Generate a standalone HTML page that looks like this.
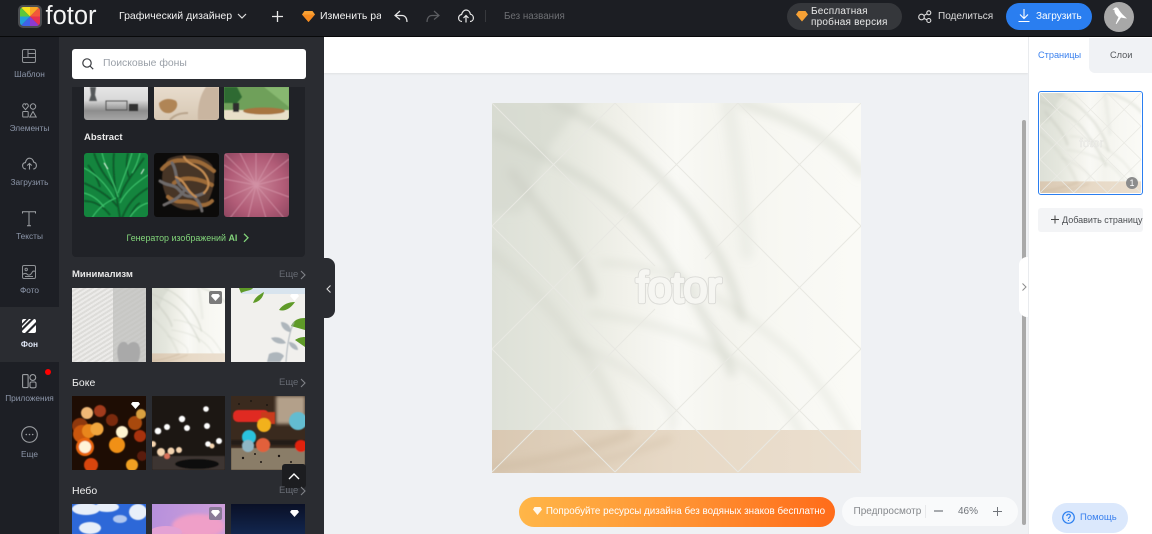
<!DOCTYPE html>
<html lang="ru"><head><meta charset="utf-8"><title>Fotor</title>
<style>
*{box-sizing:border-box}
html,body{margin:0;padding:0}
body{width:1152px;height:534px;overflow:hidden;position:relative;background:#eff1f4;font-family:"Liberation Sans","Noto Sans CJK SC",sans-serif}
.a{position:absolute}
.t{position:absolute;white-space:nowrap;line-height:1}
svg{position:absolute;display:block;overflow:visible}
.r{position:absolute;left:0;width:59px;text-align:center;font-size:8.3px;color:#8d97aa;line-height:1;white-space:nowrap}
.h{position:absolute;left:72px;font-size:9.5px;font-weight:bold;color:#e8e8e8;line-height:1}
.m{position:absolute;left:279px;font-size:9.5px;color:#666a72;line-height:1}
.i{position:absolute;overflow:hidden}
.i svg{left:0;top:0}
</style></head><body>

<svg width="0" height="0" style="position:absolute"><defs>
<filter id="b4" x="-20%" y="-20%" width="140%" height="140%"><feGaussianBlur stdDeviation="4.5"/></filter>
<filter id="b1" x="-10%" y="-10%" width="120%" height="120%"><feGaussianBlur stdDeviation=".6"/></filter>
<filter id="b3" x="-10%" y="-10%" width="120%" height="120%"><feGaussianBlur stdDeviation="1.6"/></filter>
<linearGradient id="wall" x1="0" x2="1" y1="0" y2="0"><stop offset="0" stop-color="#dde0d7"/><stop offset=".2" stop-color="#e5e7de"/><stop offset=".36" stop-color="#f1f1ea"/><stop offset=".5" stop-color="#f9f9f5"/><stop offset=".64" stop-color="#f4f4ee"/><stop offset=".8" stop-color="#f8f8f3"/><stop offset="1" stop-color="#fafaf6"/></linearGradient>
<linearGradient id="floor" x1="0" x2="1"><stop offset="0" stop-color="#d9c8b2"/><stop offset=".5" stop-color="#e7d9c6"/><stop offset="1" stop-color="#ebdfcf"/></linearGradient>
<symbol id="scene" viewBox="0 0 369 370" preserveAspectRatio="none">
<rect width="369" height="370" fill="url(#wall)"/>
<g filter="url(#b4)" fill="none" stroke="#c9ccc1" stroke-linecap="round">
<path d="M-5 -5H95L60 40 30 110H-5Z" fill="#d4d7cd" stroke="none" opacity=".6"/>
<path d="M0 30C70 60 130 90 170 150 195 185 220 220 240 270" stroke-width="7" opacity=".55"/>
<path d="M60 0C110 20 150 50 200 110 220 140 240 170 250 215" stroke-width="6" opacity=".65"/>
<path d="M20 70C50 110 90 150 100 190" stroke-width="10" opacity=".5"/>
<path d="M110 160C170 160 230 190 300 250 330 280 345 310 369 350" stroke-width="5" opacity=".38"/>
<path d="M100 210C170 220 240 240 290 300 305 320 315 340 320 360" stroke-width="5" opacity=".38"/>
<path d="M80 240C150 270 190 300 180 325" stroke-width="7" opacity=".28"/>
<path d="M250 0C300 15 340 35 369 70" stroke-width="10" opacity=".38"/>
<path d="M0 150C50 190 100 250 130 320" stroke-width="12" opacity=".25"/>
<path d="M235 0C245 40 250 100 255 150" stroke-width="14" opacity=".18"/>
</g>
<rect y="327" width="369" height="43" fill="url(#floor)"/>
<g filter="url(#b4)" fill="none" stroke="#c9b69c" opacity=".55"><path d="M0 365C50 360 100 345 140 330" stroke-width="7"/><path d="M40 372C90 365 140 350 180 335" stroke-width="4"/></g>
</symbol>
</defs></svg>

<!-- top bar -->
<div class="a" style="left:0;top:0;width:1152px;height:37px;background:#1c1e23;border-bottom:1px solid #08090a"></div>
<svg style="left:18px;top:5px" width="24" height="23" viewBox="0 0 24 23">
<rect width="24" height="23" rx="5" fill="#4a4c50"/>
<g transform="translate(12 11.5)"><clipPath id="lc"><rect x="-10" y="-9.5" width="20" height="19" rx="3.5"/></clipPath><g clip-path="url(#lc)">
<path d="M0 0L-14 -14H0Z" fill="#f7e01d"/><path d="M0 0V-14H14Z" fill="#f9a826"/><path d="M0 0L14 -14V0Z" fill="#f2583a"/><path d="M0 0H14V14Z" fill="#e8304f"/><path d="M0 0L14 14H0Z" fill="#8e3ad0"/><path d="M0 0V14H-14Z" fill="#3f62e8"/><path d="M0 0L-14 14V0Z" fill="#22a0d8"/><path d="M0 0H-14V-14Z" fill="#5cc83a"/></g></g>
</svg>
<div class="t" style="left:45.500px;top:0;font-size:25.500px;color:#f4f4f4;line-height:32px">fotor</div>
<div class="t" style="left:119px;top:11px;font-size:10.500px;color:#f2f2f2">Графический дизайнер</div>
<svg style="left:237px;top:13px" width="10" height="7" fill="none" stroke="#ddd" stroke-width="1.200"><path d="M1 1l4 4 4-4"/></svg>
<svg style="left:272px;top:11px" width="11" height="11" stroke="#e8e8e8" stroke-width="1.300"><path d="M5.500 0v11M0 5.500h11"/></svg>
<svg style="left:302px;top:11px" width="13" height="11"><path d="M2.500 0h8L13 3.500 6.500 11 0 3.500Z" fill="#f7a135"/><path d="M0 3.500h13L6.500 11Z" fill="#f58a1f"/></svg>
<div class="t" style="left:320px;top:11px;font-size:10.500px;color:#f2f2f2;width:61px;overflow:hidden">Изменить ра</div>
<svg style="left:394px;top:10px" width="14" height="13" fill="none" stroke="#e8e8e8" stroke-width="1.200"><path d="M6 1L1 5.500 6 9.500M1 5.500h7c3 0 5 2.500 5 6.500"/></svg>
<svg style="left:426px;top:10px" width="14" height="13" fill="none" stroke="#5c5e62" stroke-width="1.200"><path d="M8 1l5 4.500L8 9.500M13 5.500H6c-3 0-5 2.500-5 6.500"/></svg>
<svg style="left:458px;top:9px" width="16" height="14" fill="none" stroke="#e8e8e8" stroke-width="1.200"><path d="M4 12.500C1.500 12.500.6 10.500.6 9c0-2 1.400-3.400 3-3.500C4.200 3 6 1 8 1c2.500 0 4 2 4.400 4.200C14 5.500 15.400 7 15.400 9c0 2-1.400 3.500-3.400 3.500"/><path d="M8 13.500V6.500M5.500 9L8 6.500 10.500 9"/></svg>
<div class="a" style="left:485px;top:10px;width:1px;height:12px;background:#37393d"></div>
<div class="t" style="left:504px;top:11.500px;font-size:9.800px;color:#6d6f73">Без названия</div>

<div class="a" style="left:787px;top:3px;width:115px;height:27px;border-radius:14px;background:#35373b"></div>
<svg style="left:796px;top:11px" width="12" height="11"><path d="M2.500 0h7L12 3.500 6 10.500 0 3.500Z" fill="#f7a135"/></svg>
<div class="t" style="left:811px;top:7px;font-size:10px;color:#e8e8e8;letter-spacing:.2px;line-height:10.500px">Бесплатная<br>пробная версия</div>
<svg style="left:918px;top:10px" width="14" height="13" fill="none" stroke="#e0e0e0" stroke-width="1.100"><circle cx="3.500" cy="7" r="2.800"/><circle cx="10.800" cy="2.800" r="2"/><circle cx="10.800" cy="10.500" r="2"/><path d="M6 5.500l3-1.700M6 8.500l3 1.200"/></svg>
<div class="t" style="left:938px;top:11.500px;font-size:10px;color:#dedede">Поделиться</div>
<div class="a" style="left:1006px;top:3px;width:86px;height:27px;border-radius:14px;background:#2a7ef0"></div>
<svg style="left:1018px;top:9px" width="12" height="13" fill="none" stroke="#fff" stroke-width="1.100"><path d="M6 0v9M2 5.500L6 9.500 10 5.500M.5 12.500h11"/></svg>
<div class="t" style="left:1036px;top:11.500px;font-size:10px;color:#fff">Загрузить</div>
<div class="a" style="left:1104px;top:2px;width:30px;height:30px;border-radius:50%;background:#a8a8a8"></div>
<svg style="left:1111px;top:6px" width="17" height="21" fill="#fff"><path d="M3 2.500C5 .5 7 1.500 8 4c2 3 5 6 8 8.500C13 12 11.500 12 10 11.500L5.500 18l-.8-.3L7.500 11C5 9.500 3 6 3.500 4L1.500 3.500Z"/></svg>

<!-- left rail -->
<div class="a" style="left:0;top:37px;width:59px;height:497px;background:#1d1f25"></div>
<div class="a" style="left:0;top:307px;width:59px;height:55px;background:#2a2c31"></div>
<svg style="left:22px;top:49px" width="15" height="15" fill="none" stroke="#8f9296" stroke-width="1"><rect x=".5" y=".5" width="13" height="13" rx="1.500"/><path d="M6 .5v8M.5 8.500h13M6 4.500h7.500"/></svg>
<div class="r" style="top:70px">Шаблон</div>
<svg style="left:22px;top:103px" width="15" height="15" fill="none" stroke="#9a9da1" stroke-width="1"><path d="M3.500 6.700L.8 3.500C.3 2 1.300.8 2.300.8c.6 0 1 .3 1.200.8.2-.5.600-.8 1.200-.8 1 0 2 1.200 1.500 2.700Z"/><circle cx="11" cy="3.500" r="2.700"/><rect x=".7" y="8.500" width="5.500" height="5.500" rx=".8"/><path d="M11 8.500l3.200 5.500H7.800Z"/></svg>
<div class="r" style="top:124px">Элементы</div>
<svg style="left:22px;top:157px" width="15" height="13" fill="none" stroke="#9a9da1" stroke-width="1.100"><path d="M4 12C1.800 12 .6 10.500.6 8.800c0-1.800 1.200-3 2.800-3.200C4 3 5.600 1.200 7.500 1.200c2.300 0 3.800 1.800 4.100 3.900 1.600.3 2.800 1.700 2.800 3.600 0 1.800-1.300 3.300-3.200 3.300"/><path d="M7.500 12.500V6.500M5.200 8.500L7.500 6.500 9.800 8.500"/></svg>
<div class="r" style="top:178px">Загрузить</div>
<svg style="left:22px;top:211px" width="15" height="16" fill="none" stroke="#a0a3a7" stroke-width="1"><path d="M.5 2.500V.8h13v1.700M7 .8v14M5 14.800h4"/></svg>
<div class="r" style="top:232px">Тексты</div>
<svg style="left:22px;top:265px" width="14" height="14" fill="none" stroke="#8f9296" stroke-width="1"><rect x=".5" y=".5" width="13" height="13" rx="1.500"/><circle cx="4.200" cy="4.500" r="1.200"/><path d="M.5 9.500c2-1.500 3.500-1.500 5 0s3.500 0 4.500-2 2.500-1.500 3.500-1M3 11.500h8"/></svg>
<div class="r" style="top:286px">Фото</div>
<svg style="left:22px;top:319px" width="14" height="14"><rect width="14" height="14" rx="2" fill="#fff"/><path d="M0 9L9 0h3L0 12ZM3 14L14 3v3L6 14ZM0 4.500L4.500 0H7L0 7Z" fill="#26282d"/></svg>
<div class="r" style="top:340px;color:#dfe6f5;font-weight:bold">Фон</div>
<svg style="left:22px;top:374px" width="15" height="15" fill="none" stroke="#9a9da1" stroke-width="1.100"><rect x=".6" y=".6" width="5.500" height="13" rx="1"/><circle cx="10.800" cy="3.500" r="2.900"/><rect x="8" y="8" width="6" height="5.800" rx="1.500"/></svg>
<div class="a" style="left:45px;top:369px;width:6px;height:6px;border-radius:50%;background:#f00"></div>
<div class="r" style="top:394px">Приложения</div>
<svg style="left:21px;top:426px" width="17" height="17" fill="none" stroke="#9a9da1" stroke-width="1.100"><circle cx="8.500" cy="8.500" r="7.800"/><g fill="#9a9da1" stroke="none"><circle cx="5.300" cy="8.500" r=".8"/><circle cx="8.500" cy="8.500" r=".8"/><circle cx="11.700" cy="8.500" r=".8"/></g></svg>
<div class="r" style="top:449.500px">Еще</div>

<!-- panel -->
<div class="a" style="left:59px;top:37px;width:265px;height:497px;background:#2a2c31"></div>
<div class="a" style="left:72px;top:49px;width:234px;height:30px;border-radius:3px;background:#fff"></div>
<svg style="left:82px;top:58px" width="12" height="12" fill="none" stroke="#3a3c40" stroke-width="1.200"><circle cx="5" cy="5" r="4.200"/><path d="M8 8l3.200 3.200"/></svg>
<div class="t" style="left:103px;top:59px;font-size:10.400px;color:#9aa0a8">Поисковые фоны</div>

<div class="a" style="left:72px;top:87px;width:233px;height:170px;background:#202227;border-radius:0 0 4px 4px"></div>
<!-- top row -->
<div class="i" style="left:84px;top:87px;width:64px;height:33px;border-radius:0 0 3px 3px;background:linear-gradient(#e6e6e6,#d8d8d8 40%,#8d8d8d 72%,#a6a6a6)">
<svg width="64" height="33"><g filter="url(#b1)"><path d="M6 0h6l-1 8 2 6H5l2-6Z" fill="#55585a"/><path d="M22 14h21v9H22z" fill="none" stroke="#555" stroke-width="1"/><rect x="45" y="17" width="9" height="7" fill="#333"/></g></svg></div>
<div class="i" style="left:154px;top:87px;width:65px;height:33px;border-radius:0 0 3px 3px;background:linear-gradient(#e8dccd,#d7c8b4)">
<svg width="65" height="33"><g filter="url(#b1)"><path d="M5 16c5-5 12-5 17-2 3 4 0 10-6 12-6 1-11-3-11-10Z" fill="#b08557"/><path d="M44 33c-1-12 2-25 8-33h13v33Z" fill="#c9b5a0"/><path d="M16 33c4-5 10-7 18-7" stroke="#b9a58d" stroke-width="2" fill="none"/></g></svg></div>
<div class="i" style="left:224px;top:87px;width:65px;height:33px;border-radius:0 0 3px 3px;background:#6fa05a">
<svg width="65" height="33"><g filter="url(#b1)"><path d="M40 0h25v20Z" fill="#87b86f"/><rect y="23" width="65" height="10" fill="#e9dfc9"/><path d="M0 0h13l5 10-5 6H0Z" fill="#2f6a33"/><rect x="9" y="16" width="6" height="9" fill="#2e2e2e"/><ellipse cx="40" cy="24" rx="21" ry="3.500" fill="#a8743f"/></g></svg></div>

<div class="t" style="left:84px;top:133px;font-size:9.500px;font-weight:bold;color:#eaeaea">Abstract</div>
<div class="i" style="left:84px;top:152.500px;width:64px;height:64.500px;border-radius:3px;background:#14853e">
<svg width="64" height="65" fill="none" stroke-width="1.800"><g filter="url(#b1)"><g stroke="#0a5a2b"><path d="M30 0c-2 20 2 40 6 65M10 0c6 20 18 30 24 40M60 5C50 20 40 30 36 45M0 30c14 6 26 14 34 24M64 35C52 42 44 50 38 65M0 48c10 0 18 4 26 14M44 0c-2 10-2 18 2 26M4 12c6 8 10 14 12 22M56 50c-4 2-8 8-10 14"/></g><g stroke="#3cc16b" stroke-width="1.200"><path d="M18 0c4 18 12 28 16 44M48 0C44 15 38 28 34 40M0 15c12 6 22 16 30 30M64 22c-12 8-22 16-28 28M8 65c6-10 14-16 24-20M56 0c-2 8-4 14-8 20M0 40c8 2 14 6 20 14M64 50c-8 2-14 8-18 14"/></g><path d="M20 10l4 6M60 16l-3 5" stroke="#e8f5ea" stroke-width="1"/></g></svg></div>
<div class="i" style="left:154px;top:152.500px;width:65px;height:64.500px;border-radius:3px;background:#0c0b0a">
<svg width="65" height="65" fill="none" stroke-linecap="round"><g filter="url(#b1)"><path d="M14 6c12-6 34-6 44 6 6 12 0 30-6 40-10 8-26 6-36-2-8-12-12-30-2-44Z" fill="#463426"/><g stroke="#9c6b38" stroke-width="4"><path d="M8 16c10-12 22-8 30-8s14 4 22 10M20 30c10-8 26-4 38 2M14 44c10 8 18 2 26 6s14 2 18-2"/></g><g stroke="#6e6a6a" stroke-width="3"><path d="M6 28c8 6 14 2 20 10s16 6 24 2M18 10c6 8 2 18 10 24s18 12 20 24M10 52c8-4 14-6 20-14"/></g><g stroke="#c58d52" stroke-width="2"><path d="M30 4c4 8 14 8 20 16s6 14 0 20M22 24c10 4 10 14 20 20"/></g></g></svg></div>
<div class="i" style="left:224px;top:152.500px;width:65px;height:64.500px;border-radius:3px;background:radial-gradient(circle at 50% 50%,#c98397,#b15c77 60%,#8e4660)">
<svg width="65" height="65" stroke="#d99db0" stroke-width="1.200" opacity=".55"><g filter="url(#b1)"><path d="M32 32L0 0M32 32L16 0M32 32L32 0M32 32L50 0M32 32L65 6M32 32L65 24M32 32L65 44M32 32L60 65M32 32L42 65M32 32L24 65M32 32L6 65M32 32L0 46M32 32L0 26M32 32L0 12"/></g></svg></div>
<div class="t" style="left:126.500px;top:233.500px;font-size:8.900px;color:#82d47a">Генератор изображений <b>AI</b></div>
<svg style="left:243px;top:233px" width="6" height="10" fill="none" stroke="#82d47a" stroke-width="1.300"><path d="M1 .8l4 4-4 4"/></svg>

<div class="h" style="top:270px">Минимализм</div><div class="m" style="top:270px">Еще</div>
<svg style="left:300px;top:270px" width="6" height="10" fill="none" stroke="#808388" stroke-width="1.100"><path d="M1 1l4 4-4 4"/></svg>
<div class="i" style="left:72px;top:288px;width:74px;height:74px;background:repeating-linear-gradient(-32deg,#ecebe9 0 2px,#dddcd9 2px 4px)">
<div class="a" style="left:41px;top:0;width:33px;height:74px;background:rgba(190,189,186,.7)"></div><svg width="74" height="74" style="left:0;top:0"><path d="M47 74c-3-10-2-18 3-20 3-1 5 1 6 3 2-3 6-4 9-2 4 3 4 12 1 19Z" fill="#a9a9a9" filter="url(#b1)"/></svg></div>
<div class="i" style="left:152px;top:288px;width:73px;height:74px"><svg width="73" height="74"><use href="#scene" width="73" height="74"/></svg>
<div class="a" style="left:57px;top:3px;width:13px;height:13px;background:#7b7b7b;border-radius:2px"></div><svg style="left:59px;top:6px" width="9" height="7"><path d="M1.500 0h6L9 2 4.500 7 0 2Z" fill="#fff"/></svg></div>
<div class="i" style="left:231px;top:288px;width:74px;height:74px;background:#f1f0ed"><svg width="74" height="74"><path d="M10 0h64v6H10Z" fill="#d8e4ee"/><path d="M10 5c6-3 10-2 12-5H8ZM22 15c2-6 6-8 11-11-1 6-5 10-11 11ZM48 22c4-6 10-8 16-8-4 6-10 10-16 8ZM60 38c3-6 7-8 14-8v12ZM64 52c3-2 6-3 10-3v10Z" fill="#5f9a28"/><g filter="url(#b1)" fill="#aeb6bc"><path d="M50 34c6 0 10 4 10 10-5 0-10-4-10-10ZM40 50c6-2 12 0 15 5-6 2-12 0-15-5ZM58 54c5 0 9 4 9 8-5 0-9-4-9-8ZM38 66c6-3 12-2 15 2l-4 6H36Z"/><path d="M55 74c1-15 3-30 8-40" stroke="#aeb6bc" fill="none"/></g></svg>
<svg style="left:59px;top:6px" width="9" height="7"><path d="M1.500 0h6L9 2 4.500 7 0 2Z" fill="#fff"/></svg></div>

<div class="h" style="top:378px;font-weight:normal;font-size:10.500px;color:#f0f0f0">Боке</div><div class="m" style="top:378px">Еще</div>
<svg style="left:300px;top:378px" width="6" height="10" fill="none" stroke="#808388" stroke-width="1.100"><path d="M1 1l4 4-4 4"/></svg>
<div class="i" style="left:72px;top:396px;width:74px;height:74px;background:#1e0d04"><svg width="74" height="74"><g filter="url(#b1)">
<circle cx="8" cy="30" r="8" fill="#8f380c"/><circle cx="28" cy="15" r="6" fill="#a23a1a"/><circle cx="15" cy="17" r="6" fill="#f0b877"/><circle cx="10" cy="38" r="9" fill="#c9570c"/><circle cx="17" cy="35" r="7" fill="#e8861a"/><circle cx="25" cy="33" r="6.500" fill="#f2a63e"/><circle cx="13" cy="51" r="9" fill="#e8650c"/><circle cx="13" cy="51" r="6" fill="#fff3d8"/><circle cx="50" cy="36" r="6" fill="#fff4d0"/><circle cx="45" cy="49" r="8" fill="#f09016"/><circle cx="40" cy="24" r="6" fill="#7a2a0c"/><circle cx="63" cy="27" r="7" fill="#a8480e"/><circle cx="69" cy="18" r="5" fill="#d9a040"/><circle cx="68" cy="40" r="6" fill="#a8300e"/><circle cx="60" cy="69" r="6" fill="#f0a020"/><circle cx="19" cy="69" r="7" fill="#d8450e"/><circle cx="70" cy="60" r="5" fill="#5a1c08"/></g></svg>
<svg style="left:59px;top:6px" width="9" height="7"><path d="M1.500 0h6L9 2 4.500 7 0 2Z" fill="#fff"/></svg></div>
<div class="i" style="left:152px;top:396px;width:73px;height:74px;background:#1c1713"><svg width="73" height="74"><g filter="url(#b1)"><rect y="60" width="73" height="14" fill="#3c3530"/><ellipse cx="45" cy="68" rx="22" ry="5" fill="#0d0b0a"/><g fill="#fff"><circle cx="54" cy="13" r="2.800"/><circle cx="30" cy="23" r="3.200"/><circle cx="15" cy="31" r="3"/><circle cx="35" cy="32" r="3"/><circle cx="6" cy="35" r="3.300"/><circle cx="55" cy="30" r="3"/><circle cx="56" cy="48" r="2.800"/><circle cx="67" cy="45" r="3"/></g><g fill="#f4d4b0"><circle cx="9" cy="56" r="4"/><circle cx="19" cy="55" r="3.500"/><circle cx="27" cy="54" r="3"/><circle cx="1" cy="48" r="3"/><circle cx="60" cy="50" r="2.500"/></g><circle cx="15" cy="60" r="3" fill="#d8705a"/></g></svg></div>
<div class="i" style="left:231px;top:396px;width:74px;height:74px;background:#3a2a1e"><svg width="74" height="74"><rect x="45" y="0" width="29" height="28" fill="#b3a08a" filter="url(#b3)"/><g filter="url(#b1)"><rect x="2" y="14" width="36" height="12" rx="5" fill="#e02a20"/><rect x="30" y="16" width="14" height="12" fill="#c83a1a"/><circle cx="33" cy="29" r="7" fill="#f2b11d"/><circle cx="67" cy="25" r="9" fill="#64bcd0"/><rect x="0" y="52" width="74" height="22" fill="#8a7d68"/><rect x="0" y="44" width="74" height="5" fill="#15100c" opacity=".6"/><circle cx="18" cy="41" r="7" fill="#2cc2dd"/><circle cx="17" cy="50" r="6" fill="#8fb6c4"/><circle cx="32" cy="49" r="7" fill="#e2603a"/><circle cx="70" cy="50" r="6" fill="#e0200f"/></g><g fill="#1d1712"><circle cx="8" cy="8" r="1"/><circle cx="20" cy="5" r="1"/><circle cx="36" cy="9" r="1"/><circle cx="12" cy="62" r="1.200"/><circle cx="30" cy="66" r="1"/><circle cx="48" cy="60" r="1.200"/><circle cx="60" cy="66" r="1"/><circle cx="24" cy="58" r="1"/></g></svg></div>

<div class="a" style="left:282px;top:464px;width:24px;height:24px;border-radius:3px;background:#1c1d20"></div>
<svg style="left:288px;top:473px" width="12" height="7" fill="none" stroke="#fff" stroke-width="1.400"><path d="M1 6l5-5 5 5"/></svg>

<div class="h" style="top:486px;font-weight:normal;font-size:10.500px;color:#f0f0f0">Небо</div><div class="m" style="top:486px">Еще</div>
<svg style="left:300px;top:486px" width="6" height="10" fill="none" stroke="#808388" stroke-width="1.100"><path d="M1 1l4 4-4 4"/></svg>
<div class="i" style="left:72px;top:504px;width:74px;height:30px;background:#2d68d8"><svg width="74" height="30" fill="#e8eff9"><g filter="url(#b1)"><ellipse cx="14" cy="5" rx="14" ry="6"/><ellipse cx="35" cy="3" rx="12" ry="5"/><ellipse cx="66" cy="8" rx="9" ry="8"/><ellipse cx="18" cy="24" rx="11" ry="6"/><ellipse cx="48" cy="15" rx="7" ry="4" opacity=".7"/></g></svg></div>
<div class="i" style="left:152px;top:504px;width:73px;height:30px;background:linear-gradient(100deg,#b690dc,#cfa0da)"><svg width="73" height="30"><ellipse cx="46" cy="22" rx="26" ry="12" fill="#ef9fc8" filter="url(#b3)"/><ellipse cx="14" cy="28" rx="16" ry="6" fill="#e4a2d4"/></svg>
<div class="a" style="left:57px;top:3px;width:13px;height:13px;background:#8a7b98;border-radius:2px"></div><svg style="left:59px;top:6px" width="9" height="7"><path d="M1.500 0h6L9 2 4.500 7 0 2Z" fill="#fff"/></svg></div>
<div class="i" style="left:231px;top:504px;width:74px;height:30px;background:linear-gradient(#0a1026,#12264e)"><svg style="left:59px;top:6px" width="9" height="7"><path d="M1.500 0h6L9 2 4.500 7 0 2Z" fill="#fff"/></svg></div>

<!-- collapse tab -->
<div class="a" style="left:323px;top:258px;width:12px;height:60px;background:#2a2c31;border-radius:0 8px 8px 0"></div>
<svg style="left:326px;top:285px" width="5" height="8" fill="none" stroke="#d8d8d8" stroke-width="1.100"><path d="M4.500 .5L1 4l3.500 3.500"/></svg>

<!-- canvas area -->
<div class="a" style="left:324px;top:37px;width:704px;height:36px;background:#fff;box-shadow:0 1px 2px rgba(0,0,0,.07)"></div>
<svg style="left:492px;top:103px" width="369" height="370" viewBox="0 0 369 370">
<use href="#scene" width="369" height="370"/>
<g stroke="#e8e8e2" stroke-width="1" fill="none" clip-path="url(#cc)">
<path d="M0 0L163 163M206 206L369 369M123 0L369 246M246 0L369 123M0 123L246 369M0 246L123 369"/>
<path d="M369 0L213 156M163 206L0 369M246 0L0 246M123 0L0 123M369 123L123 369M369 246L246 369"/>
</g>
<clipPath id="cc"><rect width="369" height="370"/></clipPath>
<text x="144" y="199" font-family="Liberation Sans,sans-serif" font-size="44" letter-spacing="-.6" fill="none" stroke="#dadad6" stroke-width="4.200" stroke-linejoin="round" aria-hidden="true">fotor</text>
<text x="144" y="199" font-family="Liberation Sans,sans-serif" font-size="44" letter-spacing="-.6" fill="#f6f6f2" stroke="#f6f6f2" stroke-width="2.400" stroke-linejoin="round">fotor</text>
</svg>
<!-- scrollbar -->
<div class="a" style="left:1022px;top:120px;width:4px;height:405px;border-radius:2px;background:#a9a9a9"></div>
<div class="a" style="left:1019px;top:257px;width:12px;height:60px;background:#fff;border-radius:8px 0 0 8px"></div>
<svg style="left:1022px;top:283px" width="5" height="8" fill="none" stroke="#8c8c8c" stroke-width="1"><path d="M.5 .5L4 4 .5 7.500"/></svg>

<!-- right panel -->
<div class="a" style="left:1028px;top:37px;width:124px;height:497px;background:#fff;border-left:1px solid #e9ebee"></div>
<div class="a" style="left:1089px;top:38px;width:63px;height:35px;background:#f0f2f5;border-radius:0 0 0 6px"></div>
<div class="t" style="left:1038px;top:51px;font-size:9.200px;color:#3a80ee">Страницы</div>
<div class="t" style="left:1110px;top:51px;font-size:9.200px;color:#55585c">Слои</div>
<div class="a" style="left:1038px;top:91px;width:105px;height:104px;border:1px solid #2a7ef0;border-radius:3px;overflow:hidden;background:#fff">
<svg style="left:1px;top:1px" width="101" height="100" viewBox="0 0 369 370" preserveAspectRatio="none"><use href="#scene" width="369" height="370"/><g stroke="#eaeae4" stroke-width="3" fill="none"><path d="M0 0L369 369M123 0L369 246M246 0L369 123M0 123L246 369M0 246L123 369M369 0L0 369M246 0L0 246M123 0L0 123M369 123L123 369M369 246L246 369"/></g><text x="144" y="199" font-family="Liberation Sans,sans-serif" font-size="44" fill="#f8f8f4" stroke="#e4e4e0" stroke-width="2">fotor</text></svg>
<div class="a" style="left:87px;top:85px;width:12px;height:12px;border-radius:50%;background:#8c8c8c;color:#fff;font-size:9px;line-height:12px;text-align:center">1</div>
</div>
<div class="a" style="left:1038px;top:208px;width:105px;height:24px;background:#f3f4f6;border-radius:3px"></div>
<svg style="left:1051px;top:215px" width="8" height="9" stroke="#444" stroke-width="1"><path d="M4 .5v8M0 4.500h8"/></svg>
<div class="t" style="left:1062px;top:215.500px;font-size:9px;color:#4c4f53;width:81px;overflow:hidden">Добавить страницу</div>

<!-- bottom -->
<div class="a" style="left:519px;top:497px;width:316px;height:30px;border-radius:15px;background:linear-gradient(90deg,#ffb648,#ff9434 50%,#ff6c1a)"></div>
<svg style="left:533px;top:507px" width="9" height="8"><path d="M1.500 0h6L9 2.500 4.500 8 0 2.500Z" fill="#fff" opacity=".9"/></svg>
<div class="t" style="left:541px;top:507px;font-size:10px;color:#fff;width:289px;text-align:center;transform:scaleX(.985)">Попробуйте ресурсы дизайна без водяных знаков бесплатно</div>
<div class="a" style="left:842px;top:497px;width:176px;height:29px;border-radius:15px;background:#f9fafb"></div>
<div class="t" style="left:853.500px;top:506.500px;font-size:10px;color:#85888c">Предпросмотр</div>
<div class="a" style="left:925px;top:505px;width:1px;height:13px;background:#e8e9eb"></div>
<svg style="left:934px;top:510px" width="9" height="2"><path d="M0 1h9" stroke="#70747a" stroke-width="1.200"/></svg>
<div class="t" style="left:958px;top:506.500px;font-size:10px;color:#70747a">46%</div>
<svg style="left:993px;top:507px" width="9" height="9" stroke="#70747a" stroke-width="1"><path d="M4.500 0v9M0 4.500h9"/></svg>
<div class="a" style="left:1052px;top:503px;width:76px;height:30px;border-radius:15px;background:#dbe8fc"></div>
<svg style="left:1062px;top:511px" width="13" height="13" fill="none" stroke="#2a7ef0" stroke-width="1.200"><circle cx="6.500" cy="6.500" r="5.800"/><path d="M4.700 5c.2-1.200 1-1.800 1.900-1.800 1 0 1.800.7 1.800 1.600 0 1.500-1.900 1.500-1.900 3.100M6.500 9v1"/></svg>
<div class="t" style="left:1080px;top:513px;font-size:9.500px;color:#3a80ee">Помощь</div>
</body></html>
